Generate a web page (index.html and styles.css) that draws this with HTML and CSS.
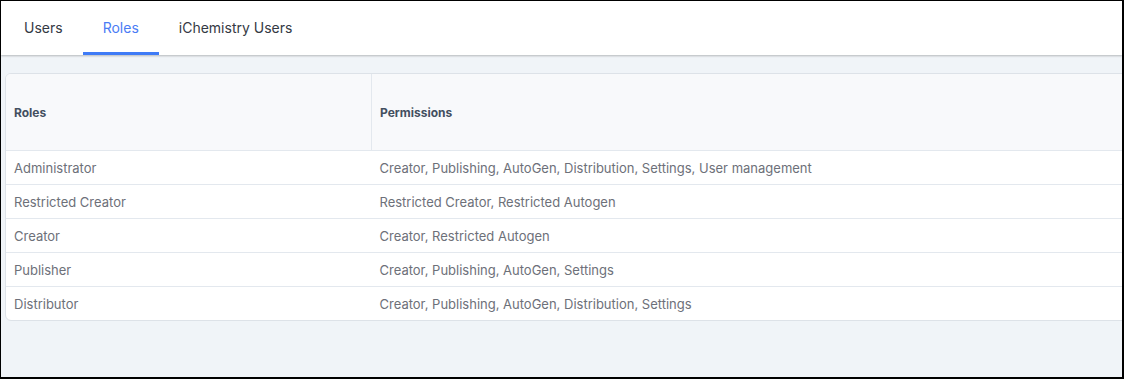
FILE: index.html
```html
<!DOCTYPE html>
<html lang="en">
<head>
    <meta charset="UTF-8">
    <meta name="viewport" content="width=device-width, initial-scale=1.0">
    <title>Roles</title>
    <link rel="stylesheet" href="styles.css">
</head>
<body>
    <div class="frame">
        <nav class="tabs">
            <a href="#" class="tab">Users</a>
            <a href="#" class="tab active" aria-current="page">Roles</a>
            <a href="#" class="tab">iChemistry Users</a>
        </nav>

        <main class="content">
            <div class="card">
                <table class="roles">
                    <thead>
                        <tr>
                            <th class="col-role">Roles</th>
                            <th>Permissions</th>
                        </tr>
                    </thead>
                    <tbody>
                        <tr>
                            <td>Administrator</td>
                            <td>Creator, Publishing, AutoGen, Distribution, Settings, User management</td>
                        </tr>
                        <tr>
                            <td>Restricted Creator</td>
                            <td>Restricted Creator, Restricted Autogen</td>
                        </tr>
                        <tr>
                            <td>Creator</td>
                            <td>Creator, Restricted Autogen</td>
                        </tr>
                        <tr>
                            <td>Publisher</td>
                            <td>Creator, Publishing, AutoGen, Settings</td>
                        </tr>
                        <tr>
                            <td>Distributor</td>
                            <td>Creator, Publishing, AutoGen, Distribution, Settings</td>
                        </tr>
                    </tbody>
                </table>
            </div>
        </main>
    </div>
</body>
</html>
```

FILE: styles.css
```css
html {
    font-family: 'Inter', 'Liberation Sans', sans-serif;
}

body {
    margin: 0;
    overflow: hidden;
}

.frame {
    box-sizing: border-box;
    height: 100vh;
    border-style: solid;
    border-color: #000;
    border-width: 1px 2px 2px 1px;
    background: #f0f4f8;
    overflow: hidden;
}

.tabs {
    display: flex;
    height: 54px;
    padding-left: 3px;
    background: #fff;
    box-shadow: 0 1px 2px rgba(0, 0, 0, 0.25);
    position: relative;
}

.tab {
    display: flex;
    align-items: center;
    padding: 0 20px;
    font-size: 14px;
    color: #343944;
    text-decoration: none;
    border-bottom: 3px solid transparent;
    padding-top: 1px;
}

.tab.active {
    color: #4a7cf5;
    border-bottom-color: #3f7bf6;
}

.content {
    padding: 18px 0 0 4px;
}

.card {
    width: 1200px;
    background: #fff;
    border: 1px solid #dde2e8;
    border-radius: 6px;
    overflow: hidden;
}

.roles {
    width: 100%;
    border-collapse: collapse;
}

.roles th {
    height: 76px;
    padding: 0 8px;
    background: #f8f9fb;
    font-size: 12px;
    font-weight: 700;
    color: #434f60;
    text-align: left;
    border-bottom: 1px solid #e3e8ee;
}

.roles th.col-role {
    width: 349px;
    border-right: 1px solid #e3e8ee;
}

.roles td {
    height: 33px;
    padding: 0 8px;
    font-size: 13px;
    color: #6d7079;
    border-bottom: 1px solid #e3e8ee;
}

.roles tbody tr:last-child td {
    border-bottom: none;
}
```
